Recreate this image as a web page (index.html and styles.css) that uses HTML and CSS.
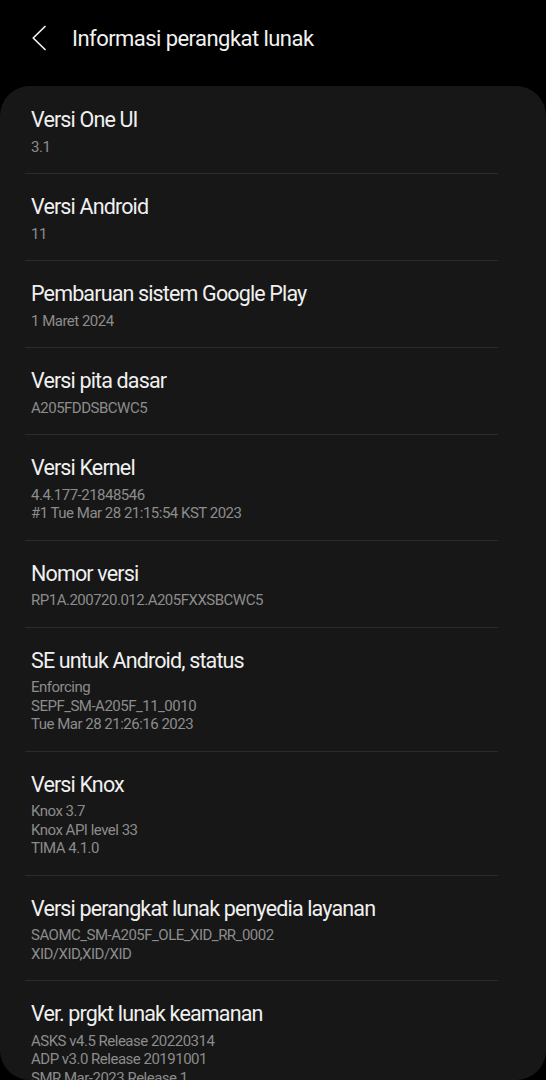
FILE: index.html
```html
<!DOCTYPE html>
<html lang="id">
<head>
<meta charset="utf-8">
<title>Informasi perangkat lunak</title>
<link rel="stylesheet" href="styles.css">
</head>
<body>
<header class="topbar">
  <svg class="back" width="16" height="26" viewBox="0 0 16 26" aria-hidden="true">
    <path d="M14 1.5 L2.2 13 L14 24.5" fill="none" stroke="#f2f2f2" stroke-width="1.7" stroke-linecap="round" stroke-linejoin="round"/>
  </svg>
  <h1 class="title">Informasi perangkat lunak</h1>
</header>
<main class="card">
  <div class="item">
    <div class="item-title">Versi One UI</div>
    <div class="item-sub">3.1</div>
  </div>
  <div class="item">
    <div class="item-title">Versi Android</div>
    <div class="item-sub">11</div>
  </div>
  <div class="item">
    <div class="item-title">Pembaruan sistem Google Play</div>
    <div class="item-sub">1 Maret 2024</div>
  </div>
  <div class="item">
    <div class="item-title">Versi pita dasar</div>
    <div class="item-sub">A205FDDSBCWC5</div>
  </div>
  <div class="item">
    <div class="item-title">Versi Kernel</div>
    <div class="item-sub">4.4.177-21848546<br>#1 Tue Mar 28 21:15:54 KST 2023</div>
  </div>
  <div class="item">
    <div class="item-title">Nomor versi</div>
    <div class="item-sub">RP1A.200720.012.A205FXXSBCWC5</div>
  </div>
  <div class="item">
    <div class="item-title">SE untuk Android, status</div>
    <div class="item-sub">Enforcing<br>SEPF_SM-A205F_11_0010<br>Tue Mar 28 21:26:16 2023</div>
  </div>
  <div class="item">
    <div class="item-title">Versi Knox</div>
    <div class="item-sub">Knox 3.7<br>Knox API level 33<br>TIMA 4.1.0</div>
  </div>
  <div class="item">
    <div class="item-title">Versi perangkat lunak penyedia layanan</div>
    <div class="item-sub">SAOMC_SM-A205F_OLE_XID_RR_0002<br>XID/XID,XID/XID</div>
  </div>
  <div class="item">
    <div class="item-title">Ver. prgkt lunak keamanan</div>
    <div class="item-sub">ASKS v4.5 Release 20220314<br>ADP v3.0 Release 20191001<br>SMR Mar-2023 Release 1</div>
  </div>
</main>
</body>
</html>
```
FILE: styles.css
```css
html, body {
  margin: 0;
  padding: 0;
  background: #000;
}
body {
  width: 546px;
  height: 1080px;
  overflow: hidden;
  font-family: Roboto, "Noto Sans", sans-serif;
  color: #f2f2f2;
}
.topbar {
  height: 86px;
  display: flex;
  align-items: center;
  padding-left: 31px;
  padding-bottom: 10px;
  box-sizing: border-box;
}
.back {
  display: block;
  flex: none;
}
.title {
  margin: 0 0 0 25px;
  font-size: 22px;
  font-weight: 400;
  letter-spacing: -0.55px;
  color: #f2f2f2;
}
.card {
  background: #171717;
  border-radius: 30px;
  height: 994px;
  overflow: hidden;
  box-sizing: border-box;
  padding: 1px 48px 0 25px;
}
.item {
  padding: 19px 0 17px 6px;
  border-bottom: 1px solid #2b2b2b;
}
.item-title {
  font-size: 21.5px;
  line-height: 28px;
  letter-spacing: -0.85px;
  color: #f0f0f0;
}
.item-sub {
  font-size: 15px;
  line-height: 18.5px;
  letter-spacing: -0.5px;
  color: #8c8c8c;
  margin-top: 3.5px;
}
```
